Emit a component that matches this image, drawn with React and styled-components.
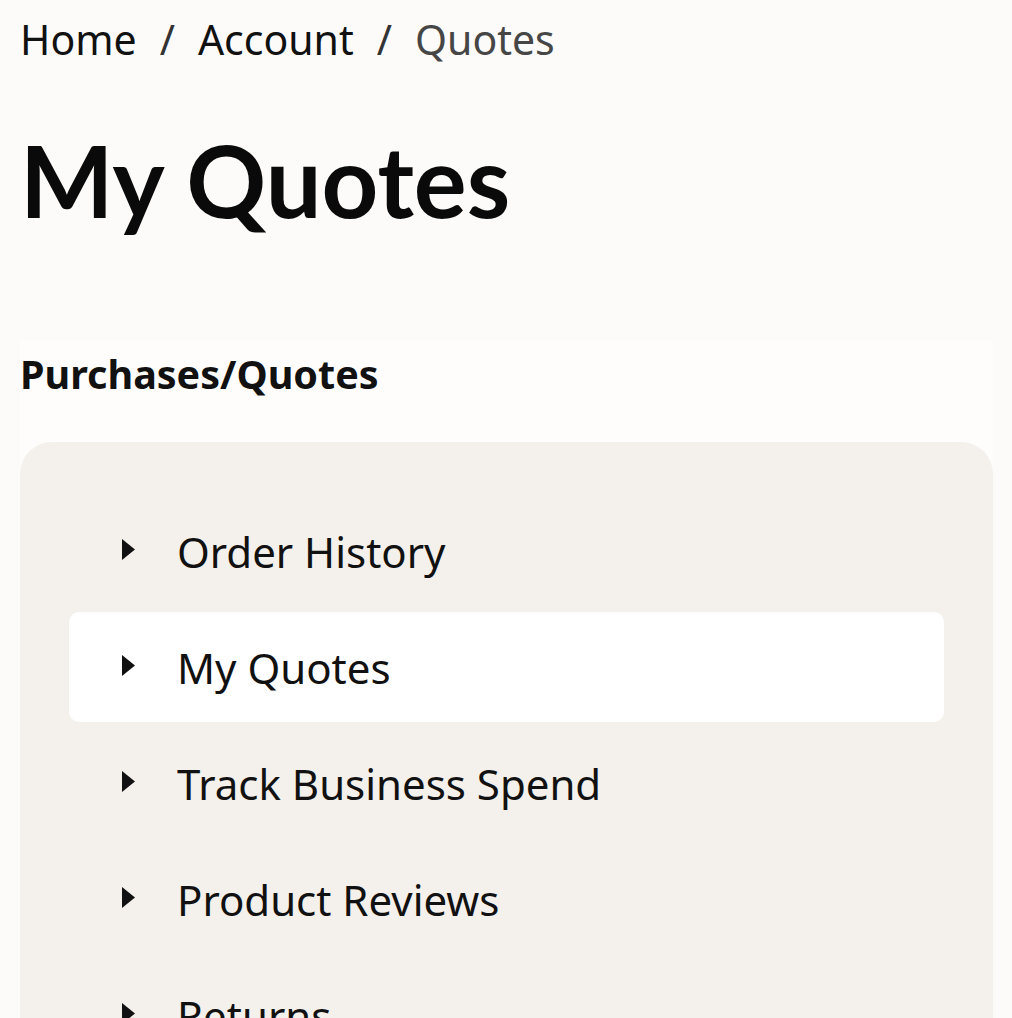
import styled, { createGlobalStyle } from 'styled-components';

const GlobalStyle = createGlobalStyle`
  html, body {
    margin: 0;
    padding: 0;
    background: #fcfbf9;
  }
  body {
    font-family: 'Noto Sans', 'Lato', sans-serif;
    color: #111;
  }
`;

const items = [
  { label: 'Order History' },
  { label: 'My Quotes', active: true },
  { label: 'Track Business Spend' },
  { label: 'Product Reviews' },
  { label: 'Returns' },
];

export default function App() {
  return (
    <Page>
      <GlobalStyle />
      <Breadcrumb>
        <Crumb>Home</Crumb>
        <Sep>/</Sep>
        <Crumb>Account</Crumb>
        <Sep>/</Sep>
        <Crumb current>Quotes</Crumb>
      </Breadcrumb>
      <Title>My Quotes</Title>
      <Section>
        <SectionTitle>Purchases/Quotes</SectionTitle>
        <Card>
          {items.map((item) => (
            <MenuRow key={item.label} active={item.active}>
              <Arrow viewBox="0 0 13 21">
                <path d="M0 0 L13 10.5 L0 21 Z" fill="#111" />
              </Arrow>
              <MenuText>{item.label}</MenuText>
            </MenuRow>
          ))}
        </Card>
      </Section>
    </Page>
  );
}

const Page = styled.div`
  height: 1018px;
  overflow: hidden;
  padding: 0 19px 0 20px;
  box-sizing: border-box;
`;

const Breadcrumb = styled.nav`
  display: flex;
  align-items: baseline;
  gap: 23px;
  padding-top: 12px;
  font-size: 41px;
  line-height: 54px;
`;

const Crumb = styled.span`
  color: ${(props) => (props.current ? '#464646' : '#111')};
`;

const Sep = styled.span`
  color: #333;
`;

const Title = styled.h1`
  margin: 54px 0 0;
  font-family: 'Lato', 'Noto Sans', sans-serif;
  font-size: 99px;
  font-weight: 700;
  line-height: 120px;
  color: #0a0a0a;
`;

const Section = styled.section`
  margin-top: 100px;
  background: #fefdfc;
`;

const SectionTitle = styled.h2`
  margin: 0;
  padding-top: 9px;
  font-size: 39.5px;
  font-weight: 700;
  line-height: 50px;
  color: #111;
`;

const Card = styled.div`
  margin-top: 43px;
  background: #f4f0eb;
  border-radius: 32px;
  padding: 54px 49px 0;
  display: flex;
  flex-direction: column;
  gap: 6px;
`;

const MenuRow = styled.div`
  display: flex;
  align-items: center;
  height: 110px;
  padding-left: 53px;
  border-radius: 10px;
  background: ${(props) => (props.active ? '#ffffff' : 'transparent')};
`;

const Arrow = styled.svg`
  width: 13px;
  height: 21px;
  flex-shrink: 0;
  margin-top: -4px;
`;

const MenuText = styled.span`
  margin-left: 42px;
  font-size: 42px;
  color: #111;
`;
